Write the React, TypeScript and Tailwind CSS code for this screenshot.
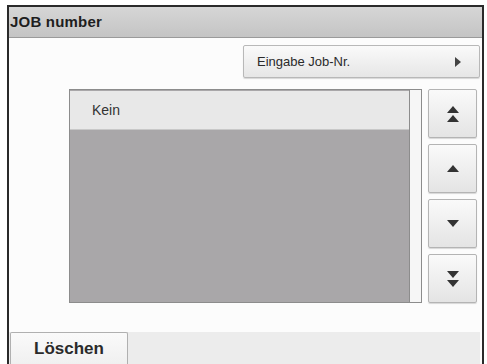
import type { ReactNode } from "react";

function ArrowButton({ children }: { children: ReactNode }) {
  return (
    <button className="flex h-[49px] w-[49px] items-center justify-center rounded-[2px] border border-[#b4b4b4] bg-gradient-to-b from-[#fafafa] to-[#e4e4e4] shadow-[0_1px_1px_rgba(0,0,0,0.15)]">
      {children}
    </button>
  );
}

function Tri({ up }: { up: boolean }) {
  return (
    <svg width="12" height="7" viewBox="0 0 12 7" className="block">
      <polygon points={up ? "6,0 12,7 0,7" : "0,0 12,0 6,7"} fill="#333" />
    </svg>
  );
}

export default function App() {
  return (
    <div
      className="h-[364px] w-[487px] overflow-hidden bg-white pl-[7px] pt-[5px]"
      style={{ fontFamily: '"Liberation Sans", Arial, sans-serif' }}
    >
      <div className="flex h-[359px] w-[477px] flex-col border-l-2 border-r-2 border-t-2 border-[#2a2a2a] bg-[#fcfcfc]">
        <div className="flex h-[31px] shrink-0 items-center border-b border-[#9a9a9a] bg-gradient-to-b from-[#d6d6d6] to-[#c4c4c4] pl-[1px] text-[15px] font-bold tracking-[0.2px] text-[#1e1e1e]">
          JOB number
        </div>

        <div className="flex flex-1 flex-col pr-[2px]">
          <div className="mt-[7px] flex justify-end">
            <button className="flex h-[33px] w-[237px] items-center justify-between rounded-[2px] border border-[#b8b8b8] bg-gradient-to-b from-[#fafafa] to-[#e6e6e6] pl-[13px] pr-[18px] text-[13px] text-[#2a2a2a] shadow-[0_1px_1px_rgba(0,0,0,0.15)]">
              <span>Eingabe Job-Nr.</span>
              <svg width="6" height="10" viewBox="0 0 6 10">
                <polygon points="0,0 6,5 0,10" fill="#444" />
              </svg>
            </button>
          </div>

          <div className="ml-[60px] mt-[11px] flex gap-[6px]">
            <div className="flex h-[214px] w-[353px] border border-[#8c8c8c]">
              <div className="flex flex-1 flex-col bg-[#a9a7a9]">
                <div className="mt-[1px] flex h-[39px] items-center border-b border-[#c8c8c8] bg-[#e8e8e8] pl-[22px] text-[14px] text-[#333]">
                  Kein
                </div>
              </div>
              <div className="w-[12px] border-l border-[#8c8c8c] bg-[#f6f6f6]" />
            </div>

            <div className="flex flex-col gap-[6px]">
              <ArrowButton>
                <div className="flex flex-col gap-[2px]">
                  <Tri up />
                  <Tri up />
                </div>
              </ArrowButton>
              <ArrowButton>
                <Tri up />
              </ArrowButton>
              <ArrowButton>
                <Tri up={false} />
              </ArrowButton>
              <ArrowButton>
                <div className="flex flex-col gap-[2px]">
                  <Tri up={false} />
                  <Tri up={false} />
                </div>
              </ArrowButton>
            </div>
          </div>

          <div className="flex-1" />

          <div className="flex h-[32px] shrink-0 items-stretch bg-[#ececec]">
            <button className="ml-[1px] flex w-[118px] items-center justify-center rounded-t-[2px] border border-b-0 border-[#b0b0b0] bg-gradient-to-b from-[#fafafa] to-[#f0f0f0] text-[17px] font-bold text-[#2a2a2a]">
              Löschen
            </button>
          </div>
        </div>
      </div>
    </div>
  );
}
